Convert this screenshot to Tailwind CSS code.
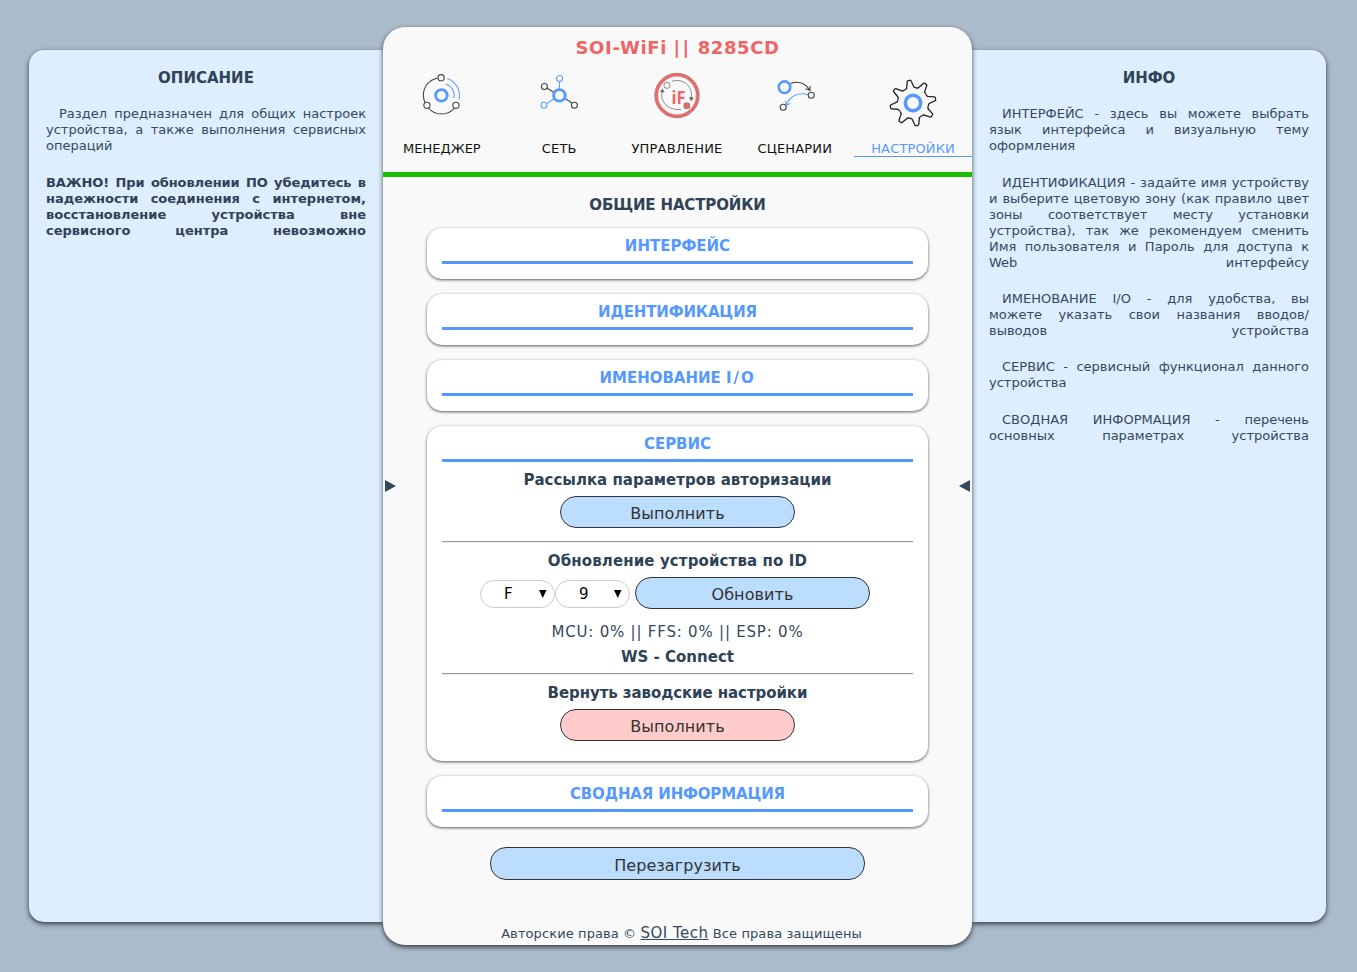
<!DOCTYPE html>
<html lang="ru">
<head>
<meta charset="utf-8">
<title>SOI-WiFi</title>
<script src="https://cdn.jsdelivr.net/npm/@tailwindcss/browser@4"></script>
</head>
<body class="h-[972px] overflow-hidden bg-[#aabbcc] font-['DejaVu_Sans',sans-serif] text-[#34495e]">
<div class="flex items-start pl-[29px] pt-[27px]">

  <aside class="mt-[23px] h-[872px] w-[354px] shrink-0 rounded-l-[15px] bg-[#def] pl-[17px] pt-[18px] text-[13px] leading-4 text-[#34495e] shadow-[0_2px_5px_rgba(0,0,0,0.7)]">
    <h2 class="w-[320px] text-center text-[15px] font-bold leading-[20px] text-[#2f4256]"><span>ОПИСАНИЕ</span></h2>
    <div class="mt-[18px] w-[320px] [&>p]:whitespace-nowrap [&>p]:[text-align-last:justify]">
      <p class="pl-[13px]">Раздел предназначен для общих настроек</p>
      <p>устройства, а также выполнения сервисных</p>
      <p><span class="inline-block">операций</span></p>
    </div>
    <div class="mt-[21px] w-[320px] font-bold text-[#2f4256] [&>p]:whitespace-nowrap [&>p]:[text-align-last:justify]">
      <p class="tracking-[-0.1px]">ВАЖНО! При обновлении ПО убедитесь в</p>
      <p>надежности соединения с интернетом,</p>
      <p>восстановление устройства вне</p>
      <p>сервисного центра невозможно</p>
    </div>
  </aside>

  <main class="relative z-10 flex h-[918px] w-[589px] shrink-0 flex-col items-center rounded-[22px] bg-[#f9f9f9] shadow-[0_2px_5px_rgba(0,0,0,0.7)]">
    <h1 class="mt-[9px] h-[24px] text-[18px] font-bold leading-[24px] text-[#f06464]"><span class="tracking-[0.7px]">SOI-WiFi</span> <span class="tracking-[2.4px]">||</span> <span class="tracking-[0.6px]">8285CD</span></h1>

    <nav class="flex h-[112px] w-full text-[13px] leading-4 text-[#111]">
      <a class="flex w-[117.8px] flex-col items-center">
        <svg class="mt-[10px] -ml-px" width="50" height="50" viewBox="-.4 0 50 50" fill="none" stroke="#444" stroke-width="1.1">
          <path d="M21.500 8C12 10 7 17 7 25c0 3 .7 5.500 1.500 7.500M12 38c3 3.500 7.500 6 13 6s10.300-2.500 13-6"/>
          <circle cx="24.700" cy="7.700" r="3.100"/><circle cx="10.500" cy="35.300" r="3.100"/><circle cx="39.500" cy="35.300" r="3.100"/>
          <path stroke="#5aa0fa" d="M31 8.500C39 11.500 44.500 19 42.800 29.500M29.500 14c6 2 9.300 8 8 14"/>
          <circle cx="25" cy="25.400" r="5.800" stroke="#5599ff" stroke-width="2.800"/>
        </svg>
        <span class="mt-[21px]">МЕНЕДЖЕР</span>
      </a>
      <a class="flex w-[117.8px] flex-col items-center">
        <svg class="mt-[10px] -ml-px" width="50" height="50" viewBox="-.4 0 50 50" fill="none" stroke="#444" stroke-width="1.100">
          <path d="m12.500 18 8 5M30 28l7.500 5"/><circle cx="10" cy="16.500" r="3"/><circle cx="40" cy="35.300" r="3"/>
          <g stroke="#5aa0fa"><path d="M25 20v-8.500M20 28.500l-7.500 5"/><circle cx="25.200" cy="8.500" r="3"/><circle cx="9.600" cy="35.300" r="3"/></g>
          <circle cx="25" cy="25.400" r="5.800" stroke="#5599ff" stroke-width="2.800"/>
        </svg>
        <span class="mt-[21px] -ml-px tracking-[0.2px]">СЕТЬ</span>
      </a>
      <a class="flex w-[117.8px] flex-col items-center">
        <svg class="mt-[10px]" width="50" height="50" viewBox="0 0 50 50" fill="none" stroke="#888" stroke-width="1">
          <circle cx="25" cy="25.500" r="22.200" stroke="#777" stroke-width=".9"/>
          <circle cx="25" cy="25.500" r="20.600" stroke="#f06464" stroke-width="2.800"/>
          <circle cx="25" cy="25.500" r="19" stroke="#aaa" stroke-width=".6"/>
          <path d="M20 11.300C29 8 41 14.500 39.500 28M10 22c-2 10 6 18.500 19 17.500"/>
          <circle cx="15" cy="15.300" r="3.100"/><path fill="#666" stroke="none" d="m37 27 5 .8-3 3.400zM8 22l2.500-3.500 2 4z"/>
          <rect x="32" y="33" width="5.500" height="5.500" rx="1" fill="#f06464"/>
          <text x="19.500" y="33.500" font-family="Open Sans, sans-serif" font-weight="700" font-size="18" textLength="14" lengthAdjust="spacingAndGlyphs" fill="#f06464" stroke="none">iF</text>
        </svg>
        <span class="mt-[21px] -ml-px tracking-[0.2px]">УПРАВЛЕНИЕ</span>
      </a>
      <a class="flex w-[117.8px] flex-col items-center">
        <svg class="mt-[10px]" width="50" height="50" viewBox="0 0 50 50" fill="none" stroke="#444" stroke-width="1.100">
          <path d="M20.500 13.500c8-3 15-.500 19 6.500M35.500 18.800l4.500 1.700v-4.500"/>
          <path stroke="#5aa0fa" d="M38 24.500c-9-2.500-18 1-21.500 10M15.500 30.500l.7 4.500 4.300-1.500"/>
          <circle cx="41.200" cy="25.200" r="3"/><circle cx="13.200" cy="37.300" r="3"/>
          <circle cx="14.500" cy="17.200" r="5.800" stroke="#5599ff" stroke-width="2.600"/>
        </svg>
        <span class="mt-[21px] -ml-px tracking-[0.15px]">СЦЕНАРИИ</span>
      </a>
      <a class="flex w-[117.8px] flex-col items-center text-[#5599ff]">
        <svg class="mt-[18px]" width="50" height="50" viewBox="-25 -25 50 50" fill="none" stroke="#222" stroke-width="1.300" stroke-linejoin="round">
          <defs><path id="tooth" d="M-5.900-14.300L-3.800-15.400-1.900-22.300Q-1.700-22.900-1-22.900H1Q1.700-22.900 1.900-22.300L3.800-15.400 5.900-14.300"/></defs>
          <use href="#tooth" transform="rotate(-10)"/><use href="#tooth" transform="rotate(33)"/><use href="#tooth" transform="rotate(79)"/><use href="#tooth" transform="rotate(124)"/><use href="#tooth" transform="rotate(170)"/><use href="#tooth" transform="rotate(214)"/><use href="#tooth" transform="rotate(260)"/><use href="#tooth" transform="rotate(305)"/>
          <circle r="7.700" stroke="#5599ff" stroke-width="3.500"/>
        </svg>
        <span class="mt-[12px] h-[17px] w-full border-b border-[#5599ff] pt-px text-center leading-4 tracking-[0.15px]">НАСТРОЙКИ</span>
      </a>
    </nav>

    <div class="h-[5px] w-full bg-[#17bf04]"></div>
    <h2 class="mt-[18px] h-[20px] text-[15px] font-bold leading-[20px] tracking-[-0.15px] text-[#2f4256]"><span>ОБЩИЕ НАСТРОЙКИ</span></h2>

    <div class="mt-[13px] flex flex-col gap-[15px] text-center text-[15px] [&>section]:w-[501px] [&>section]:rounded-[15px] [&>section]:bg-white [&>section]:px-[15px] [&>section]:shadow-[0_1px_3px_rgba(0,0,0,0.65)]">
      <section class="h-[51px]"><h3 class="h-[36px] border-b-3 border-[#5599ff] pt-[8px] font-bold leading-[20px] text-[#5599ff]"><span>ИНТЕРФЕЙС</span></h3></section>
      <section class="h-[51px]"><h3 class="h-[36px] border-b-3 border-[#5599ff] pt-[8px] font-bold leading-[20px] tracking-[-0.15px] text-[#5599ff]"><span>ИДЕНТИФИКАЦИЯ</span></h3></section>
      <section class="h-[51px]"><h3 class="h-[36px] border-b-3 border-[#5599ff] pt-[8px] font-bold leading-[20px] text-[#5599ff]"><span>ИМЕНОВАНИЕ</span> <span class="tracking-[1.900px]">I/O</span></h3></section>
      <section class="h-[335px]">
        <h3 class="h-[36px] border-b-3 border-[#5599ff] pt-[8px] font-bold leading-[20px] text-[#5599ff]"><span>СЕРВИС</span></h3>
        <p class="mt-[8px] h-[20px] font-bold leading-[20px] text-[#2f4256]"><span>Рассылка параметров авторизации</span></p>
        <button class="mt-[6px] block mx-auto h-[32px] w-[235px] rounded-[16px] border border-[#333] bg-[#bbddff] pt-[3px] text-[16px] tracking-[0.1px] text-[#333]"><span>Выполнить</span></button>
        <div class="mt-[13px] h-[2px] border-t border-b border-t-[#999] border-b-[#eee]"></div>
        <p class="mt-[8px] h-[20px] font-bold leading-[20px] tracking-[0.12px] text-[#2f4256]"><span>Обновление устройства по ID</span></p>
        <div class="mt-[5px] flex justify-center pr-[5px]">
          <div class="mt-[4px] flex h-[28px] w-[75px] items-center rounded-full border border-[#ccc] pl-[23px] text-[15px] text-black"><span class="w-[35px] text-left">F</span><svg width="8" height="8"><path d="M0 0h7.500L3.750 8z"/></svg></div>
          <div class="mt-[4px] flex h-[28px] w-[75px] items-center rounded-full border border-[#ccc] pl-[23px] text-[15px] text-black"><span class="w-[35px] text-left">9</span><svg width="8" height="8"><path d="M0 0h7.500L3.750 8z"/></svg></div>
          <button class="ml-[5px] mt-px h-[32px] w-[235px] rounded-[16px] border border-[#333] bg-[#bbddff] pt-[3px] text-[16px] tracking-[0.1px] text-[#333]"><span>Обновить</span></button>
        </div>
        <p class="mt-[13px] h-[20px] leading-[20px] tracking-[0.79px]"><span>MCU: 0% || FFS: 0% || ESP: 0%</span></p>
        <p class="mt-[5px] h-[20px] font-bold leading-[20px] text-[#2f4256]"><span>WS - Connect</span></p>
        <div class="mt-[6px] h-[2px] border-t border-b border-t-[#999] border-b-[#eee]"></div>
        <p class="mt-[8px] h-[20px] font-bold leading-[20px] tracking-[-0.08px] text-[#2f4256]"><span>Вернуть заводские настройки</span></p>
        <button class="mt-[6px] block mx-auto h-[32px] w-[235px] rounded-[16px] border border-[#333] bg-[#ffcccb] pt-[3px] text-[16px] tracking-[0.1px] text-[#333]"><span>Выполнить</span></button>
      </section>
      <section class="h-[51px]"><h3 class="h-[36px] border-b-3 border-[#5599ff] pt-[8px] font-bold leading-[20px] tracking-[-0.15px] text-[#5599ff]"><span>СВОДНАЯ ИНФОРМАЦИЯ</span></h3></section>
    </div>

    <button class="mt-[20px] h-[33px] w-[375px] rounded-[16px] border border-[#333] bg-[#bbddff] pt-[4px] text-[16px] tracking-[0.05px] text-[#333]"><span>Перезагрузить</span></button>
    <footer class="mt-[43px] h-[20px] whitespace-nowrap pl-[8px] text-[13px] leading-[20px] tracking-[0.1px]"><span>Авторские права © <a class="text-[15px] underline tracking-[0.5px]">SOI Tech</a> Все права защищены</span></footer>

    <svg class="absolute left-[2px] top-[453px]" width="11" height="12" fill="#34495e"><path d="M0 0 11 6 0 12z"/></svg>
    <svg class="absolute right-[2px] top-[453px]" width="11" height="12" fill="#34495e"><path d="M11 0 0 6l11 6z"/></svg>
  </main>

  <aside class="mt-[23px] h-[872px] w-[354px] shrink-0 rounded-r-[15px] bg-[#def] pl-[17px] pt-[18px] text-[13px] leading-4 text-[#34495e] shadow-[0_2px_5px_rgba(0,0,0,0.7)]">
    <h2 class="w-[320px] text-center text-[15px] font-bold leading-[20px] text-[#2f4256]"><span>ИНФО</span></h2>
    <div class="mt-[18px] flex w-[320px] flex-col [&_p]:whitespace-nowrap [&_p]:[text-align-last:justify]">
      <div>
        <p class="pl-[13px]">ИНТЕРФЕЙС - здесь вы можете выбрать</p>
        <p>язык интерфейса и визуальную тему</p>
        <p><span class="inline-block">оформления</span></p>
      </div>
      <div class="mt-[21px]">
        <p class="pl-[13px]">ИДЕНТИФИКАЦИЯ - задайте имя устройству</p>
        <p>и выберите цветовую зону (как правило цвет</p>
        <p>зоны соответствует месту установки</p>
        <p>устройства), так же рекомендуем сменить</p>
        <p>Имя пользователя и Пароль для доступа к</p>
        <p>Web интерфейсу</p>
      </div>
      <div class="mt-[20px]">
        <p class="pl-[13px]">ИМЕНОВАНИЕ I/O - для удобства, вы</p>
        <p>можете указать свои названия вводов/</p>
        <p>выводов устройства</p>
      </div>
      <div class="mt-[20px]">
        <p class="pl-[13px]">СЕРВИС - сервисный функционал данного</p>
        <p><span class="inline-block">устройства</span></p>
      </div>
      <div class="mt-[21px]">
        <p class="pl-[13px]">СВОДНАЯ ИНФОРМАЦИЯ - перечень</p>
        <p>основных параметрах устройства</p>
      </div>
    </div>
  </aside>
</div>
</body>
</html>
